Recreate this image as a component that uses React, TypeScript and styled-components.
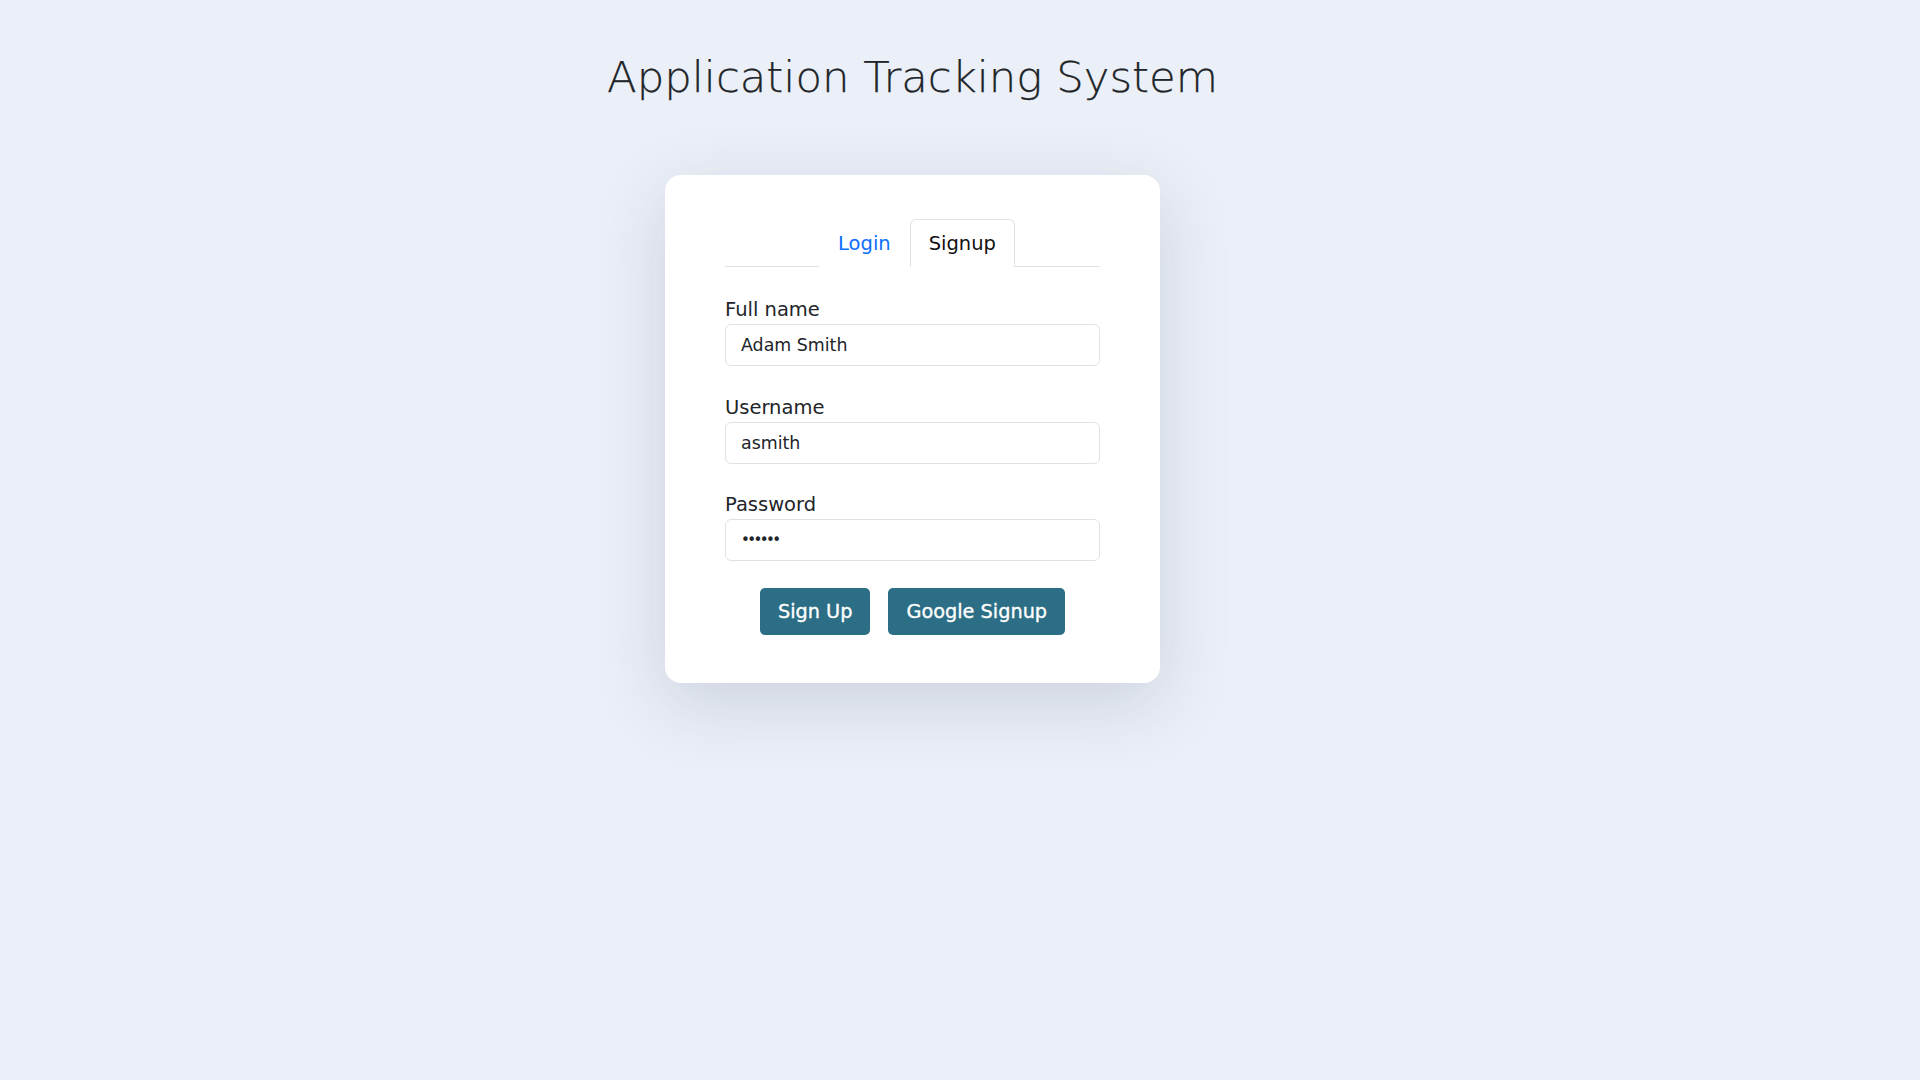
import React from "react";
import styled, { createGlobalStyle } from "styled-components";

const Global = createGlobalStyle`
  html, body { margin: 0; padding: 0; }
  body {
    background: #ebeff7;
    font-family: "DejaVu Sans", "Liberation Sans", sans-serif;
    color: #212529;
  }
  * { box-sizing: border-box; }
`;

const Page = styled.main`
  min-height: 1080px;
  display: flex;
  flex-direction: column;
  align-items: center;
  padding: 51px 95px 0 0;
`;

const Title = styled.h1`
  margin: 0;
  text-align: center;
  font-size: 43.4px;
  font-weight: 300;
  line-height: 52px;
  color: #212529;
  -webkit-text-stroke: 0.25px #212529;
`;

const Card = styled.section`
  margin-top: 72px;
  width: 495px;
  background: #ffffff;
  border-radius: 16px;
  padding: 44px 60px 48px;
  box-shadow: 0 20px 70px rgba(50, 65, 100, 0.17);
  display: flex;
  flex-direction: column;
`;

const Tabs = styled.nav`
  display: flex;
  justify-content: center;
  padding-left: 9px;
  border-bottom: 1px solid #dee2e6;
  margin-bottom: 28px;
`;

const Tab = styled.button<{ $active?: boolean }>`
  font-family: inherit;
  font-size: 19.5px;
  line-height: 30px;
  padding: 9px 18px 7px;
  margin-bottom: -1px;
  background: #fff;
  cursor: pointer;
  border: 1px solid ${(p) => (p.$active ? "#dee2e6" : "transparent")};
  border-bottom-color: ${(p) => (p.$active ? "#fff" : "transparent")};
  border-radius: 6px 6px 0 0;
  color: ${(p) => (p.$active ? "#111" : "#0d6efd")};
`;

const Field = styled.div`
  display: flex;
  flex-direction: column;
  margin-bottom: 26.5px;
`;

const Label = styled.label`
  font-size: 19.5px;
  line-height: 29px;
  color: #212529;
`;

const Input = styled.input<{ $secret?: boolean }>`
  font-family: inherit;
  height: 42px;
  border: 1px solid #dee2e6;
  border-radius: 6px;
  padding: 0 15px;
  font-size: ${(p) => (p.$secret ? "15px" : "17.4px")};
  letter-spacing: ${(p) => (p.$secret ? "-2.6px" : "normal")};
  color: #212529;
  background: #fff;
  outline: none;
`;

const Actions = styled.div`
  display: flex;
  justify-content: center;
  gap: 18px;
`;

const Button = styled.button`
  font-family: inherit;
  height: 47px;
  padding: 0 18px;
  background: #2b6e85;
  color: #fff;
  border: none;
  border-radius: 5px;
  font-size: 19.3px;
  font-weight: 500;
  -webkit-text-stroke: 0.35px #fff;
  cursor: pointer;
`;

export default function App() {
  return (
    <>
      <Global />
      <Page>
        <Title>Application Tracking System</Title>
        <Card>
          <Tabs>
            <Tab>Login</Tab>
            <Tab $active>Signup</Tab>
          </Tabs>
          <Field>
            <Label>Full name</Label>
            <Input defaultValue="Adam Smith" />
          </Field>
          <Field>
            <Label>Username</Label>
            <Input defaultValue="asmith" />
          </Field>
          <Field>
            <Label>Password</Label>
            <Input $secret type="password" defaultValue="123456" />
          </Field>
          <Actions>
            <Button>Sign Up</Button>
            <Button>Google Signup</Button>
          </Actions>
        </Card>
      </Page>
    </>
  );
}
